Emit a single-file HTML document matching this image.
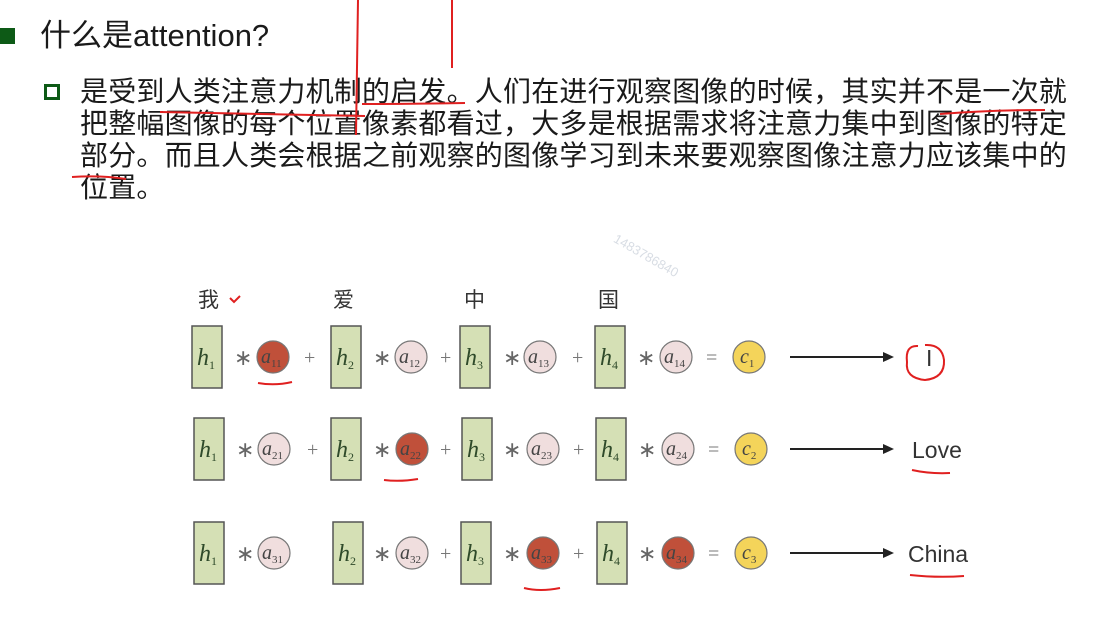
<!DOCTYPE html>
<html><head><meta charset="utf-8"><style>
html,body{margin:0;padding:0;background:#fff;width:1101px;height:639px;overflow:hidden;position:relative}
.t{position:absolute;font-family:"Liberation Sans","Noto Sans CJK SC",sans-serif;color:#1a1a1a;white-space:nowrap}
</style></head><body>
<div style="position:absolute;left:0;top:28px;width:15px;height:16px;background:#0d5a16"></div>
<div class="t" style="left:40px;top:16px;font-size:31px;line-height:40px">什么是attention?</div>
<div style="position:absolute;left:44px;top:84px;width:10px;height:10px;border:3px solid #0d5a16"></div>
<div class="t" style="left:80px;top:76px;font-size:28px;line-height:32px;letter-spacing:0.2px">是受到人类注意力机制的启发。人们在进行观察图像的时候，其实并不是一次就<br>把整幅图像的每个位置像素都看过，大多是根据需求将注意力集中到图像的特定<br>部分。而且人类会根据之前观察的图像学习到未来要观察图像注意力应该集中的<br>位置。</div>
<div class="t" style="left:610px;top:248px;font-size:13px;color:#d8dde4;transform:rotate(30deg)">1483786840</div>
<svg width="1101" height="639" style="position:absolute;left:0;top:0" font-family="Liberation Serif,serif">
<g font-family="Noto Sans CJK SC,sans-serif" font-size="21" fill="#333">
<text x="198" y="307">我</text><text x="333" y="307">爱</text><text x="464" y="307">中</text><text x="598" y="307">国</text></g>
<g id="rows" font-size="20" fill="#555">
</g>
<g stroke="#e02020" stroke-width="2" fill="none">
<path d="M358 0 L356 135"/><path d="M452 0 L452 68"/>
<path d="M160 112 Q250 114 365 116"/><path d="M362 104 Q410 104 465 103"/>
<path d="M72 177 Q100 175 126 179"/><path d="M940 114 Q990 110 1045 110"/>
<path d="M918 346 Q905 345 907 362 Q905 378 925 380 Q945 378 944 360 Q942 344 925 345"/>
<path d="M258 383 Q275 386 292 382"/><path d="M384 480 Q400 482 418 479"/>
<path d="M524 588 Q540 592 560 588"/><path d="M912 470 Q930 474 950 473"/><path d="M910 575 Q938 578 964 576"/>
<path d="M230 298 l4 4 l6 -6"/>
</g>
</svg>
<script>
var rows=[[357,[[192,241,273,'11','#c0503a',310],[331,380,411,'12','#f0dede',446],[460,510,540,'13','#f0dede',578],[595,644,676,'14','#f0dede',0]],'c1'],
[449,[[194,243,274,'21','#f0dede',313],[331,380,412,'22','#c0503a',446],[462,510,543,'23','#f0dede',579],[596,645,678,'24','#f0dede',0]],'c2'],
[553,[[194,243,274,'31','#f0dede',0],[333,380,412,'32','#f0dede',446],[461,510,543,'33','#c0503a',579],[597,645,678,'34','#c0503a',0]],'c3']];
var outs=['I','Love','China'];var s='';
rows.forEach(function(r,ri){var y=r[0];r[1].forEach(function(c,i){
s+='<rect x="'+c[0]+'" y="'+(y-31)+'" width="30" height="62" fill="#d5e0b5" stroke="#555" stroke-width="1.5"/>';
s+='<text x="'+(c[0]+5)+'" y="'+(y+8)+'" font-style="italic" font-size="24" fill="#2f4a2a">h<tspan font-size="12" font-style="normal" dy="4">'+(i+1)+'</tspan></text>';
s+='<text x="'+(c[1]-7)+'" y="'+(y+8)+'" font-size="22" fill="#666">∗</text>';
s+='<circle cx="'+c[2]+'" cy="'+y+'" r="16" fill="'+c[4]+'" stroke="#777" stroke-width="1.2"/>';
s+='<text x="'+(c[2]-12)+'" y="'+(y+6)+'" font-style="italic" font-size="20" fill="#444">a<tspan font-size="11" font-style="normal" dy="4">'+c[3]+'</tspan></text>';
if(c[5])s+='<text x="'+(c[5]-6)+'" y="'+(y+7)+'" font-size="20" fill="#777">+</text>';});
var cx=ri==0?749:751;
s+='<text x="'+(ri==0?706:708)+'" y="'+(y+7)+'" font-size="20" fill="#777">=</text>';
s+='<circle cx="'+cx+'" cy="'+y+'" r="16" fill="#f4d45a" stroke="#777" stroke-width="1.2"/>';
s+='<text x="'+(cx-9)+'" y="'+(y+6)+'" font-style="italic" font-size="20" fill="#444">c<tspan font-size="11" font-style="normal" dy="4">'+(ri+1)+'</tspan></text>';
s+='<line x1="790" y1="'+y+'" x2="885" y2="'+y+'" stroke="#222" stroke-width="2"/><path d="M883 '+(y-5)+' L894 '+y+' L883 '+(y+5)+'Z" fill="#222"/>';
var ox=[926,912,908][ri];
s+='<text x="'+ox+'" y="'+(y+9)+'" font-family="Liberation Sans,sans-serif" font-size="23" fill="#333">'+outs[ri]+'</text>';});
document.getElementById('rows').innerHTML=s;
</script>
</body></html>
